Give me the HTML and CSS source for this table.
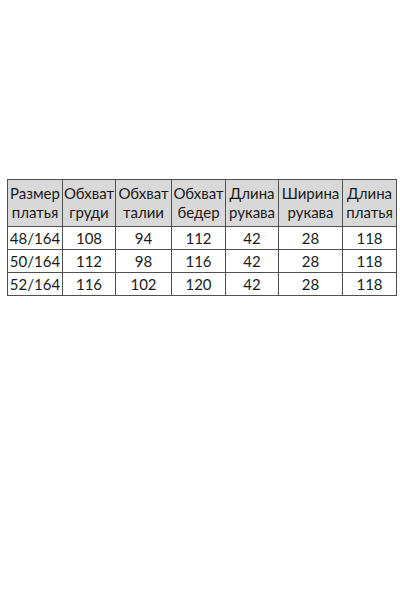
FILE: index.html
```html
<!DOCTYPE html>
<html lang="ru">
<head>
<meta charset="utf-8">
<link rel="stylesheet" href="styles.css">
</head>
<body>
<table class="sizes">
  <colgroup>
    <col class="c1"><col class="c2"><col class="c3"><col class="c4"><col class="c5"><col class="c6"><col class="c7">
  </colgroup>
  <thead>
    <tr>
      <th>Размер<br>платья</th>
      <th>Обхват<br>груди</th>
      <th>Обхват<br>талии</th>
      <th>Обхват<br>бедер</th>
      <th>Длина<br>рукава</th>
      <th>Ширина<br>рукава</th>
      <th>Длина<br>платья</th>
    </tr>
  </thead>
  <tbody>
    <tr><td>48/164</td><td>108</td><td>94</td><td>112</td><td>42</td><td>28</td><td>118</td></tr>
    <tr><td>50/164</td><td>112</td><td>98</td><td>116</td><td>42</td><td>28</td><td>118</td></tr>
    <tr><td>52/164</td><td>116</td><td>102</td><td>120</td><td>42</td><td>28</td><td>118</td></tr>
  </tbody>
</table>
</body>
</html>
```
FILE: styles.css
```css
html, body {
  margin: 0;
  padding: 0;
  background: #ffffff;
}
body {
  width: 400px;
  height: 600px;
  font-family: "Lato", "Open Sans", sans-serif;
  color: #1a1a1a;
}
.sizes {
  margin: 179px 0 0 7px;
  border-collapse: collapse;
  table-layout: fixed;
  width: 389px;
}
.c1 { width: 55px; }
.c2 { width: 53px; }
.c3 { width: 56px; }
.c4 { width: 54px; }
.c5 { width: 53px; }
.c6 { width: 64px; }
.c7 { width: 54px; }
.sizes th, .sizes td {
  border: 1px solid #505050;
  text-align: center;
  padding: 0;
  font-size: 15px;
  font-weight: normal;
  white-space: nowrap;
}
.sizes th {
  background: #d9d9d9;
  height: 46px;
  line-height: 19px;
}
.sizes td {
  height: 22px;
  line-height: 22px;
}
```
